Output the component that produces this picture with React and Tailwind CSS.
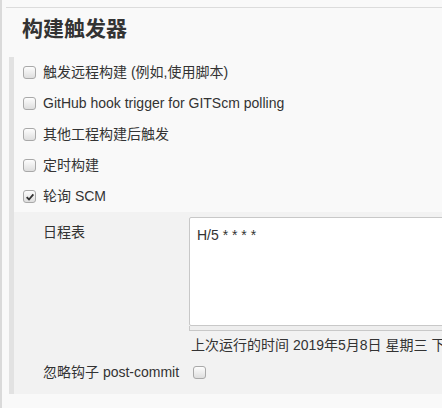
import React from 'react';

const font = { fontFamily: '"Liberation Sans", "Noto Sans CJK SC", sans-serif' };

function Box({ checked }) {
  return (
    <span className="inline-flex items-center justify-center w-[13px] h-[13px] rounded-[3px] border border-[#a9a9a9] bg-gradient-to-b from-[#fdfdfd] to-[#dedede] shrink-0">
      {checked && (
        <svg viewBox="0 0 12 12" className="w-[10px] h-[10px]">
          <path d="M2 6.2 L4.8 9 L10 2.8" fill="none" stroke="#333" strokeWidth="2.2" />
        </svg>
      )}
    </span>
  );
}

const triggers = [
  { label: '触发远程构建 (例如,使用脚本)' },
  { label: 'GitHub hook trigger for GITScm polling' },
  { label: '其他工程构建后触发' },
  { label: '定时构建' },
  { label: '轮询 SCM', checked: true },
];

export default function App() {
  return (
    <div
      className="w-[442px] h-[408px] overflow-hidden bg-[#f9f9f9] border-l-2 border-[#dadada] text-[#333] text-[14px]"
      style={font}
    >
      <div className="pt-[7px] pl-[4px]">
        <div className="border-t border-[#dcdcdc] w-[600px]">
          <h2 className="pl-[16px] pt-[5px] h-[49px] text-[21px] font-bold leading-[31px]">构建触发器</h2>

          <div className="ml-[3px] border-l-[5px] border-[#e2e2e2]">
            {triggers.map((t) => (
              <div key={t.label} className="h-[31px] flex items-center pl-[9px] gap-[7px]">
                <Box checked={t.checked} />
                <span>{t.label}</span>
              </div>
            ))}

            <div className="bg-[#f2f2f2] pt-[5px] h-[182px]">
              <div className="flex">
                <div className="w-[175px] pl-[29px] pt-[5px] shrink-0">日程表</div>
                <div className="w-[400px]">
                  <div className="h-[109px] bg-white border border-[#c8c8c8] rounded-[2px] px-[7px] py-[7px]">H/5 * * * *</div>
                  <div className="h-[5px] border border-[#c8c8c8] border-t-0 bg-[#eeeeee]"></div>
                  <div className="pt-[4px] pl-[2px] h-[24px] leading-[20px] whitespace-nowrap">上次运行的时间 2019年5月8日 星期三 下午2:03:29 CST</div>
                </div>
              </div>
              <div className="flex items-center h-[34px]">
                <div className="w-[179px] pl-[29px] shrink-0">忽略钩子 post-commit</div>
                <Box />
              </div>
            </div>
          </div>
        </div>
      </div>
    </div>
  );
}
